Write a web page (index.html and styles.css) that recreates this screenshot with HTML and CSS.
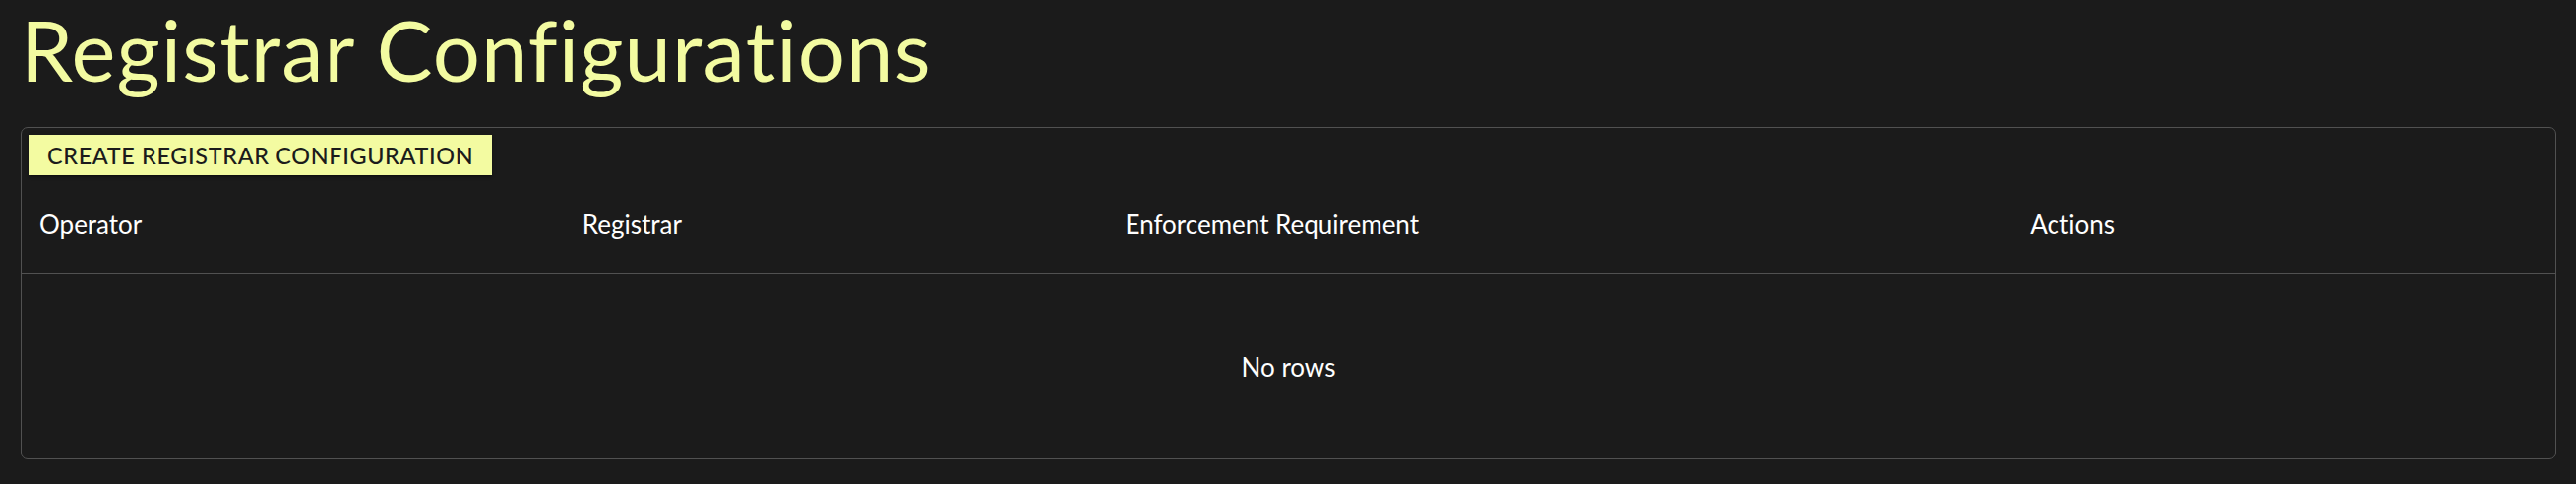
FILE: index.html
```html
<!DOCTYPE html>
<html lang="en">
<head>
<meta charset="utf-8">
<title>Registrar Configurations</title>
<link rel="stylesheet" href="styles.css">
</head>
<body>
<main class="page">
  <h1 class="title">Registrar Configura<span class="nolig">ti</span>ons</h1>
  <section class="grid-card">
    <div class="toolbar">
      <button class="create-btn" type="button">Create Registrar Configuration</button>
    </div>
    <div class="header-row">
      <div class="header-cell">Operator</div>
      <div class="header-cell">Registrar</div>
      <div class="header-cell">Enforcement Requirement</div>
      <div class="header-cell">Actions</div>
    </div>
    <div class="grid-body">
      <span class="empty">No rows</span>
    </div>
  </section>
</main>
</body>
</html>
```

FILE: styles.css
```css
html, body {
  margin: 0;
  padding: 0;
  background: #1b1b1b;
}

body {
  font-family: Lato, "Open Sans", sans-serif;
  color: #ffffff;
}

.page {
  padding: 0 20px 0 21px;
}

.title {
  margin: 0;
  font-size: 85px;
  font-weight: 400;
  line-height: 101px;
  letter-spacing: 1.1px;
  color: #f3fba1;
}

.nolig {
  font-variant-ligatures: none;
}

.grid-card {
  margin-top: 28px;
  border: 1px solid #515151;
  border-radius: 7px;
  display: flex;
  flex-direction: column;
}

.toolbar {
  padding: 7px 7px 6px;
  display: flex;
}

.create-btn {
  height: 41px;
  padding: 0 19px;
  border: none;
  border-radius: 0;
  background: #f3fba1;
  color: #1b1b1b;
  font-family: Lato, "Open Sans", sans-serif;
  font-size: 23.4px;
  font-weight: 500;
  letter-spacing: 0.02857em;
  text-transform: uppercase;
  box-shadow: 0 3px 1px -2px rgba(0,0,0,0.2), 0 2px 2px 0 rgba(0,0,0,0.14), 0 1px 5px 0 rgba(0,0,0,0.12);
  cursor: pointer;
}

.header-row {
  display: grid;
  grid-template-columns: 1fr 1fr 1.667fr 1fr;
  height: 94px;
  border-bottom: 1px solid #515151;
}

.header-cell {
  display: flex;
  align-items: center;
  padding: 0 18px 6px;
  font-size: 26px;
  font-weight: 400;
  color: #ffffff;
  font-variant-ligatures: no-common-ligatures;
}

.grid-body {
  height: 187px;
  display: flex;
  align-items: center;
  justify-content: center;
}

.empty {
  font-size: 26px;
  color: #ffffff;
}
```
